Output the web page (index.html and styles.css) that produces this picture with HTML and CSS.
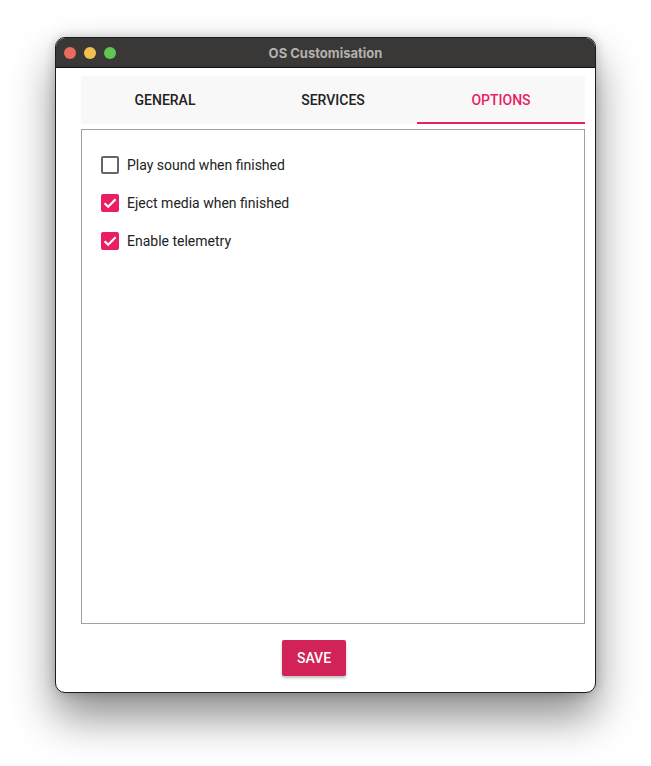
FILE: index.html
```html
<!DOCTYPE html>
<html lang="en">
<head>
    <meta charset="UTF-8">
    <title>OS Customisation</title>
    <link rel="stylesheet" href="styles.css">
</head>
<body>
    <div class="window">
        <div class="titlebar">
            <div class="lights">
                <span class="light red"></span>
                <span class="light yellow"></span>
                <span class="light green"></span>
            </div>
            <div class="title">OS Customisation</div>
        </div>
        <div class="content">
            <div class="tabs">
                <div class="tab">GENERAL</div>
                <div class="tab">SERVICES</div>
                <div class="tab active">OPTIONS</div>
            </div>
            <div class="panel">
                <label class="option">
                    <span class="box"></span>
                    Play sound when finished
                </label>
                <label class="option">
                    <span class="box checked">
                        <svg width="18" height="18" viewBox="0 0 18 18"><path d="M3.6 9.2l3.6 3.6L14.6 5.2" fill="none" stroke="#fff" stroke-width="2.2"/></svg>
                    </span>
                    Eject media when finished
                </label>
                <label class="option">
                    <span class="box checked">
                        <svg width="18" height="18" viewBox="0 0 18 18"><path d="M3.6 9.2l3.6 3.6L14.6 5.2" fill="none" stroke="#fff" stroke-width="2.2"/></svg>
                    </span>
                    Enable telemetry
                </label>
            </div>
            <div class="actions">
                <button class="save">SAVE</button>
            </div>
        </div>
    </div>
</body>
</html>
```

FILE: styles.css
```css
/* Base Styles */
body {
    margin: 0;
    background-color: #fff;
    font-family: Roboto, "Liberation Sans", sans-serif;
    padding: 37px 0 74px 55px;
}

.window {
    width: 539px;
    height: 654px;
    border: 1px solid #1c1c1c;
    border-radius: 10px;
    overflow: hidden;
    background-color: #fff;
    box-shadow: 0 24px 44px rgba(0, 0, 0, 0.45), 0 0 12px rgba(0, 0, 0, 0.2);
    display: flex;
    flex-direction: column;
}

.titlebar {
    flex-shrink: 0;
    height: 29px;
    background-color: #3a3836;
    border-bottom: 1px solid #111;
    display: flex;
    align-items: center;
    position: relative;
}

.lights {
    display: flex;
    gap: 8px;
    padding-left: 8px;
}

.light {
    width: 12px;
    height: 12px;
    border-radius: 50%;
}

.red { background-color: #ec6a5e; }
.yellow { background-color: #f4bf4f; }
.green { background-color: #61c554; }

.title {
    position: absolute;
    left: 0;
    right: 0;
    text-align: center;
    color: #b3b1af;
    font-family: Inter, "Liberation Sans", sans-serif;
    font-weight: 700;
    font-size: 13px;
}

.content {
    flex: 1;
    padding: 8px 10px 0 25px;
    display: flex;
    flex-direction: column;
}

.tabs {
    display: flex;
    flex-shrink: 0;
    height: 48px;
    background-color: #f8f8f8;
}

.tab {
    flex: 1;
    display: flex;
    align-items: center;
    justify-content: center;
    font-size: 14px;
    font-weight: 500;
    color: #222;
    border-bottom: 2px solid transparent;
    box-sizing: border-box;
    padding-top: 2px;
}

.tab.active {
    color: #e91e63;
    border-bottom-color: #e91e63;
}

.panel {
    flex-shrink: 0;
    box-sizing: border-box;
    margin-top: 5px;
    height: 495px;
    border: 1px solid #a0a0a0;
    padding: 26px 19px 0;
    display: flex;
    flex-direction: column;
    gap: 20px;
}

.option {
    display: flex;
    align-items: center;
    gap: 8px;
    height: 18px;
    font-size: 14px;
    color: #222;
}

.box {
    width: 18px;
    height: 18px;
    box-sizing: border-box;
    border: 2px solid #666;
    border-radius: 2px;
    display: flex;
}

.box.checked {
    border: none;
    background-color: #e91e63;
}

.actions {
    padding: 16px 0 0 201px;
}

.save {
    width: 64px;
    height: 36px;
    border: none;
    border-radius: 2px;
    background-color: #d12357;
    color: #fff;
    font-family: Roboto, "Liberation Sans", sans-serif;
    font-size: 14px;
    font-weight: 500;
    box-shadow: 0 2px 3px rgba(0, 0, 0, 0.25);
}
```
